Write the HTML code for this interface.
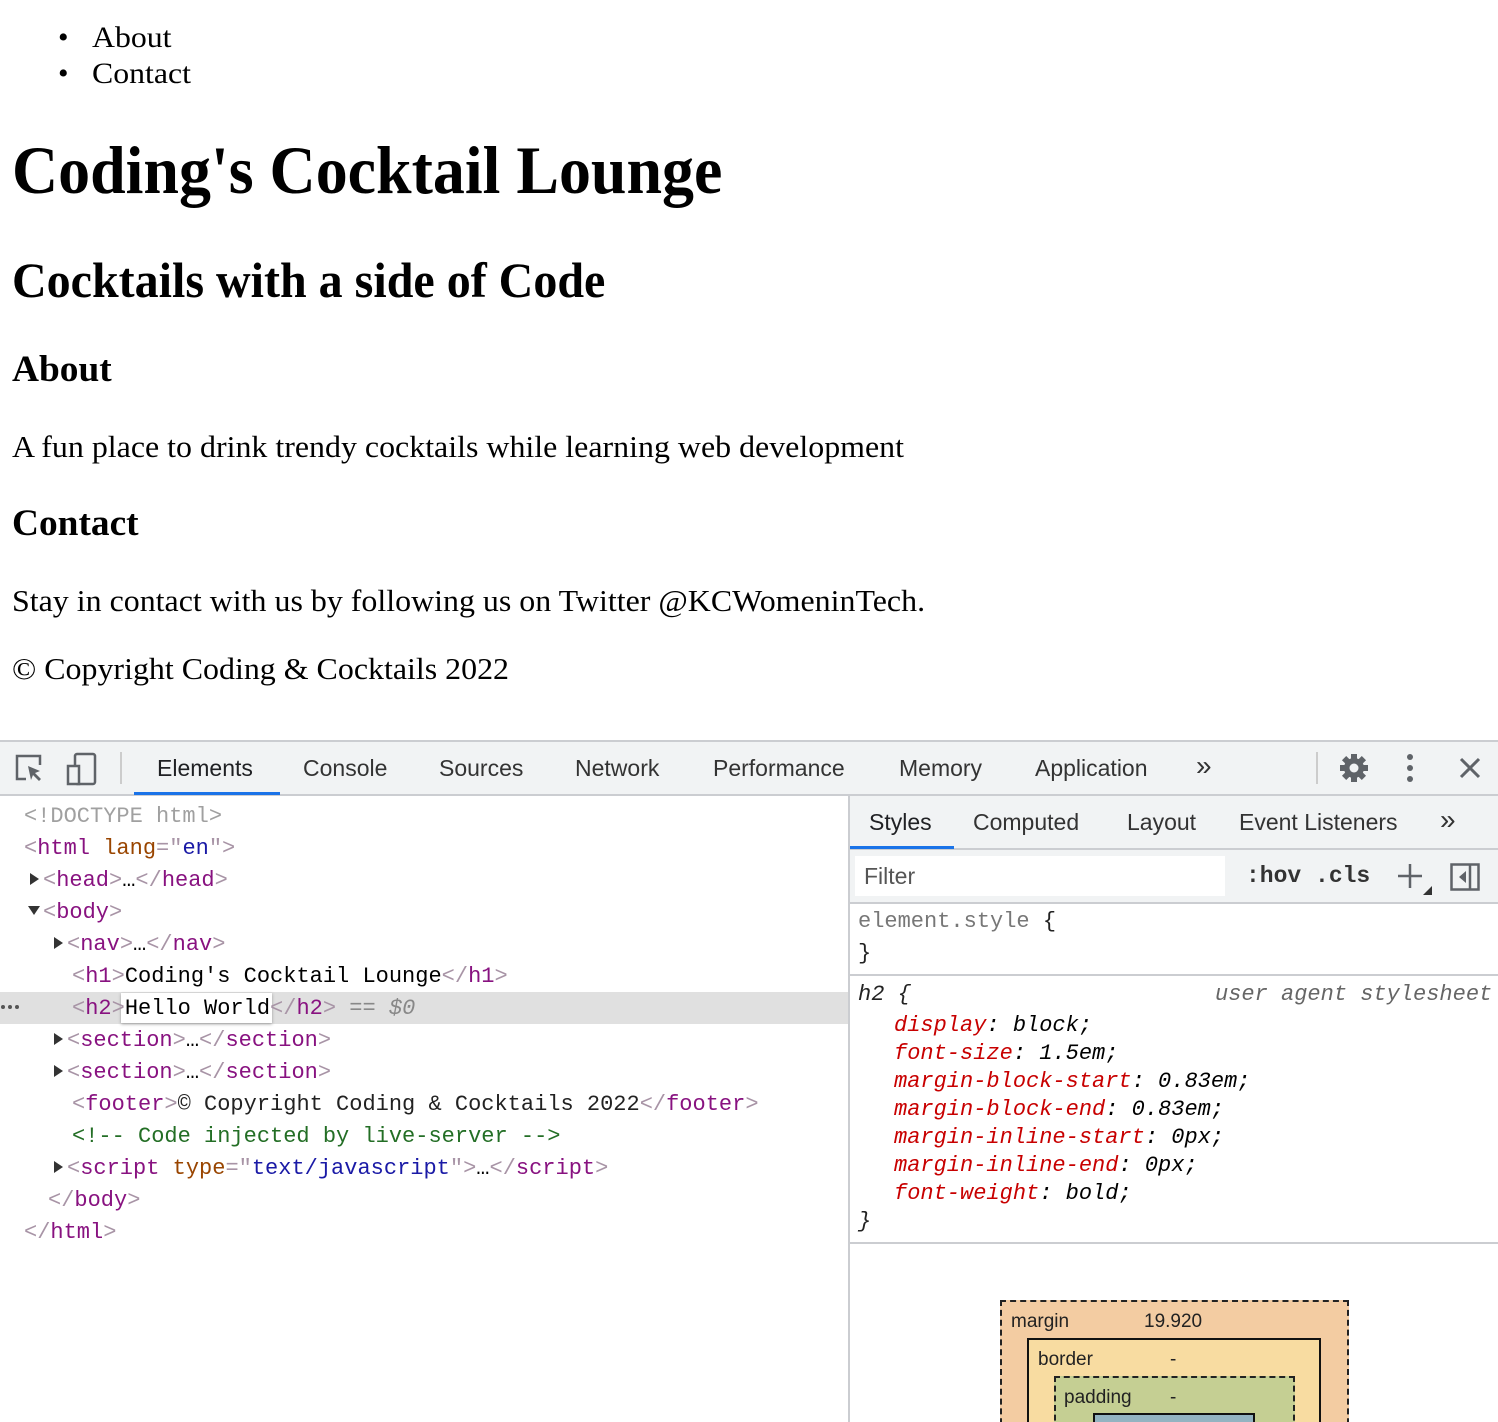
<!DOCTYPE html>
<html style="overflow:hidden;height:1422px"><head><style>
body{margin:0;width:1498px;height:1422px;overflow:hidden;background:#fff;position:relative;font-family:"Liberation Sans",sans-serif}
.a{position:absolute;white-space:nowrap}
.s{font-family:"Liberation Serif",serif;color:#000;transform-origin:0 50%}
.m{font-family:"Liberation Mono",monospace;font-size:22px;line-height:32px;height:32px}
.t{color:#881280}.b{color:#a894a6}.n{color:#994500}.v{color:#1a1aa6}.c{color:#236e25}.g{color:#a0a0a0}
.tri{display:inline-block;width:0;height:0;border-top:6px solid transparent;border-bottom:6px solid transparent;border-left:9px solid #333;margin-right:4px;vertical-align:1px}
.trd{display:inline-block;width:0;height:0;border-left:6px solid transparent;border-right:6px solid transparent;border-top:9px solid #333;margin-right:3px;vertical-align:3px}
.ui{font-size:23px;color:#333;line-height:54px}
.sm{font-family:"Liberation Mono",monospace;font-size:22px;line-height:28px;font-style:italic}
.p{color:#c80000}
</style></head><body>
<div class="a s" style="left:58px;top:19px;font-size:30px;line-height:38px">•</div>
<div class="a s" style="left:58px;top:55px;font-size:30px;line-height:38px">•</div>
<div class="a s" style="left:92px;top:19px;font-size:30px;line-height:38px;transform:scaleX(1.06)">About</div>
<div class="a s" style="left:92px;top:55px;font-size:30px;line-height:38px;transform:scaleX(1.06)">Contact</div>
<div class="a s" style="left:12px;top:130px;font-size:68px;line-height:80px;font-weight:bold;transform:scaleX(.94)">Coding's Cocktail Lounge</div>
<div class="a s" style="left:12px;top:250px;font-size:50px;line-height:60px;font-weight:bold;transform:scaleX(.96)">Cocktails with a side of Code</div>
<div class="a s" style="left:12px;top:348px;font-size:37px;line-height:44px;font-weight:bold;transform:scaleX(1.01)">About</div>
<div class="a s" style="left:12px;top:427px;font-size:31px;line-height:40px;transform:scaleX(1.03)">A fun place to drink trendy cocktails while learning web development</div>
<div class="a s" style="left:12px;top:502px;font-size:37px;line-height:44px;font-weight:bold;transform:scaleX(1.01)">Contact</div>
<div class="a s" style="left:12px;top:581px;font-size:31px;line-height:40px;transform:scaleX(1.03)">Stay in contact with us by following us on Twitter @KCWomeninTech.</div>
<div class="a s" style="left:12px;top:649px;font-size:31px;line-height:40px;transform:scaleX(1.03)">© Copyright Coding &amp; Cocktails 2022</div>

<!-- devtools toolbar -->
<div class="a" style="left:0;top:740px;width:1498px;height:2px;background:#cbcdd1"></div>
<div class="a" style="left:0;top:742px;width:1498px;height:52px;background:#f1f3f4"></div>
<div class="a" style="left:0;top:794px;width:1498px;height:2px;background:#cbcdd1"></div>
<svg class="a" style="left:14px;top:753px" width="32" height="32" viewBox="0 0 32 32"><path d="M12 26H3V3h23v9" fill="none" stroke="#5f6368" stroke-width="2.5"/><path d="M14 13l12 5-5 2 6 6-2 2-6-6-2 5z" fill="#5f6368"/></svg>
<svg class="a" style="left:66px;top:752px" width="32" height="34" viewBox="0 0 32 34"><rect x="9" y="2" width="20" height="30" rx="2" fill="none" stroke="#5f6368" stroke-width="2.5"/><rect x="2" y="14" width="11" height="18" fill="#f1f3f4" stroke="#5f6368" stroke-width="2.5"/></svg>
<div class="a" style="left:120px;top:752px;width:2px;height:32px;background:#ccc"></div>
<div class="a ui" style="left:157px;top:741px;color:#202124">Elements</div>
<div class="a" style="left:134px;top:792px;width:146px;height:3px;background:#1a73e8"></div>
<div class="a ui" style="left:303px;top:741px">Console</div>
<div class="a ui" style="left:439px;top:741px">Sources</div>
<div class="a ui" style="left:575px;top:741px">Network</div>
<div class="a ui" style="left:713px;top:741px">Performance</div>
<div class="a ui" style="left:899px;top:741px">Memory</div>
<div class="a ui" style="left:1035px;top:741px">Application</div>
<div class="a ui" style="left:1196px;top:739px;font-size:28px">»</div>
<div class="a" style="left:1316px;top:752px;width:2px;height:32px;background:#ccc"></div>
<svg class="a" style="left:1338px;top:752px" width="32" height="32" viewBox="0 0 32 32"><g fill="#5f6368"><circle cx="16" cy="16" r="10"/><rect x="13" y="2" width="6" height="28"/><rect x="2" y="13" width="28" height="6"/><rect x="13" y="2" width="6" height="28" transform="rotate(45 16 16)"/><rect x="13" y="2" width="6" height="28" transform="rotate(-45 16 16)"/></g><circle cx="16" cy="16" r="4.5" fill="#f1f3f4"/></svg>
<svg class="a" style="left:1400px;top:752px" width="20" height="32"><g fill="#5f6368"><circle cx="10" cy="5" r="3"/><circle cx="10" cy="16" r="3"/><circle cx="10" cy="27" r="3"/></g></svg>
<svg class="a" style="left:1458px;top:756px" width="24" height="24"><path d="M3 3l18 18M21 3L3 21" stroke="#5f6368" stroke-width="3"/></svg>

<!-- elements panel -->
<div class="a" style="left:0;top:992px;width:848px;height:32px;background:#e0e0e0"></div>
<div class="a m g" style="left:24px;top:801px">&lt;!DOCTYPE html&gt;</div>
<div class="a m" style="left:24px;top:833px"><span class="b">&lt;</span><span class="t">html</span> <span class="n">lang</span><span class="b">="</span><span class="v">en</span><span class="b">"&gt;</span></div>
<div class="a m" style="left:30px;top:865px"><span class="tri"></span><span class="b">&lt;</span><span class="t">head</span><span class="b">&gt;</span>…<span class="b">&lt;/</span><span class="t">head</span><span class="b">&gt;</span></div>
<div class="a m" style="left:28px;top:897px"><span class="trd"></span><span class="b">&lt;</span><span class="t">body</span><span class="b">&gt;</span></div>
<div class="a m" style="left:54px;top:929px"><span class="tri"></span><span class="b">&lt;</span><span class="t">nav</span><span class="b">&gt;</span>…<span class="b">&lt;/</span><span class="t">nav</span><span class="b">&gt;</span></div>
<div class="a m" style="left:72px;top:961px"><span class="b">&lt;</span><span class="t">h1</span><span class="b">&gt;</span>Coding's Cocktail Lounge<span class="b">&lt;/</span><span class="t">h1</span><span class="b">&gt;</span></div>
<svg class="a" style="left:0;top:1004px" width="24" height="6"><g fill="#555"><circle cx="3" cy="3" r="2"/><circle cx="10" cy="3" r="2"/><circle cx="17" cy="3" r="2"/></g></svg>
<div class="a" style="left:121px;top:993px;width:151px;height:30px;background:#fff;box-shadow:0 1px 3px #999"></div>
<div class="a m" style="left:72px;top:993px"><span class="b">&lt;</span><span class="t">h2</span><span class="b">&gt;</span><span style="color:#000">Hello World</span><span class="b">&lt;/</span><span class="t">h2</span><span class="b">&gt;</span> <span style="color:#888">== <i>$0</i></span></div>
<div class="a m" style="left:54px;top:1025px"><span class="tri"></span><span class="b">&lt;</span><span class="t">section</span><span class="b">&gt;</span>…<span class="b">&lt;/</span><span class="t">section</span><span class="b">&gt;</span></div>
<div class="a m" style="left:54px;top:1057px"><span class="tri"></span><span class="b">&lt;</span><span class="t">section</span><span class="b">&gt;</span>…<span class="b">&lt;/</span><span class="t">section</span><span class="b">&gt;</span></div>
<div class="a m" style="left:72px;top:1089px"><span class="b">&lt;</span><span class="t">footer</span><span class="b">&gt;</span><span style="color:#222">© Copyright Coding &amp; Cocktails 2022</span><span class="b">&lt;/</span><span class="t">footer</span><span class="b">&gt;</span></div>
<div class="a m c" style="left:72px;top:1121px">&lt;!-- Code injected by live-server --&gt;</div>
<div class="a m" style="left:54px;top:1153px"><span class="tri"></span><span class="b">&lt;</span><span class="t">script</span> <span class="n">type</span><span class="b">="</span><span class="v">text/javascript</span><span class="b">"&gt;</span>…<span class="b">&lt;/</span><span class="t">script</span><span class="b">&gt;</span></div>
<div class="a m" style="left:48px;top:1185px"><span class="b">&lt;/</span><span class="t">body</span><span class="b">&gt;</span></div>
<div class="a m" style="left:24px;top:1217px"><span class="b">&lt;/</span><span class="t">html</span><span class="b">&gt;</span></div>

<!-- sidebar -->
<div class="a" style="left:848px;top:796px;width:2px;height:626px;background:#cbcdd1"></div>
<div class="a" style="left:850px;top:796px;width:648px;height:52px;background:#f1f3f4"></div>
<div class="a" style="left:850px;top:848px;width:648px;height:2px;background:#cbcdd1"></div>
<div class="a" style="left:850px;top:846px;width:104px;height:3px;background:#1a73e8"></div>
<div class="a ui" style="left:869px;top:795px;color:#202124">Styles</div>
<div class="a ui" style="left:973px;top:795px">Computed</div>
<div class="a ui" style="left:1127px;top:795px">Layout</div>
<div class="a ui" style="left:1239px;top:795px">Event Listeners</div>
<div class="a ui" style="left:1440px;top:793px;font-size:28px">»</div>
<div class="a" style="left:850px;top:850px;width:648px;height:52px;background:#f1f3f4"></div>
<div class="a" style="left:855px;top:856px;width:370px;height:40px;background:#fff"></div>
<div class="a ui" style="left:864px;top:849px;color:#555">Filter</div>
<div class="a" style="left:1246px;top:860px;font-family:'Liberation Mono',monospace;font-size:23px;font-weight:bold;color:#333;line-height:32px">:hov&nbsp;.cls</div>
<svg class="a" style="left:1396px;top:862px" width="38" height="34"><path d="M14 2v24M2 14h24" stroke="#5f6368" stroke-width="2.5"/><path d="M36 24v9h-9z" fill="#333"/></svg>
<svg class="a" style="left:1450px;top:863px" width="30" height="28"><rect x="1.5" y="1.5" width="27" height="25" fill="none" stroke="#5f6368" stroke-width="2.5"/><path d="M20 2v24" stroke="#5f6368" stroke-width="2.5"/><path d="M16 8v12l-7-6z" fill="#5f6368"/></svg>
<div class="a" style="left:850px;top:902px;width:648px;height:2px;background:#cbcdd1"></div>
<div class="a m" style="left:858px;top:906px;color:#777">element.style <span style="color:#222">{</span></div>
<div class="a m" style="left:858px;top:938px;color:#222">}</div>
<div class="a" style="left:850px;top:974px;width:648px;height:2px;background:#cbcdd1"></div>
<div class="a sm" style="left:858px;top:981px;color:#222">h2 {</div>
<div class="a sm" style="left:1215px;top:981px;color:#666">user agent stylesheet</div>
<div class="a sm" style="left:894px;top:1012px"><span class="p">display</span>: block;</div>
<div class="a sm" style="left:894px;top:1040px"><span class="p">font-size</span>: 1.5em;</div>
<div class="a sm" style="left:894px;top:1068px"><span class="p">margin-block-start</span>: 0.83em;</div>
<div class="a sm" style="left:894px;top:1096px"><span class="p">margin-block-end</span>: 0.83em;</div>
<div class="a sm" style="left:894px;top:1124px"><span class="p">margin-inline-start</span>: 0px;</div>
<div class="a sm" style="left:894px;top:1152px"><span class="p">margin-inline-end</span>: 0px;</div>
<div class="a sm" style="left:894px;top:1180px"><span class="p">font-weight</span>: bold;</div>
<div class="a sm" style="left:858px;top:1208px;color:#222">}</div>
<div class="a" style="left:850px;top:1242px;width:648px;height:2px;background:#cbcdd1"></div>

<!-- box model -->
<div class="a" style="left:1000px;top:1300px;width:345px;height:140px;background:#f3cca2;border:2px dashed #222"></div>
<div class="a" style="left:1011px;top:1311px;font-size:19px;color:#222">margin</div>
<div class="a" style="left:1144px;top:1311px;font-size:19px;color:#222">19.920</div>
<div class="a" style="left:1027px;top:1338px;width:290px;height:100px;background:#f8dca1;border:2px solid #111"></div>
<div class="a" style="left:1038px;top:1349px;font-size:19px;color:#222">border</div>
<div class="a" style="left:1170px;top:1349px;font-size:19px;color:#222">-</div>
<div class="a" style="left:1054px;top:1376px;width:237px;height:60px;background:#c5cf93;border:2px dashed #222"></div>
<div class="a" style="left:1064px;top:1387px;font-size:19px;color:#222">padding</div>
<div class="a" style="left:1170px;top:1387px;font-size:19px;color:#222">-</div>
<div class="a" style="left:1093px;top:1413px;width:158px;height:20px;background:#93b3c1;border:2px solid #111"></div>
</body></html>
